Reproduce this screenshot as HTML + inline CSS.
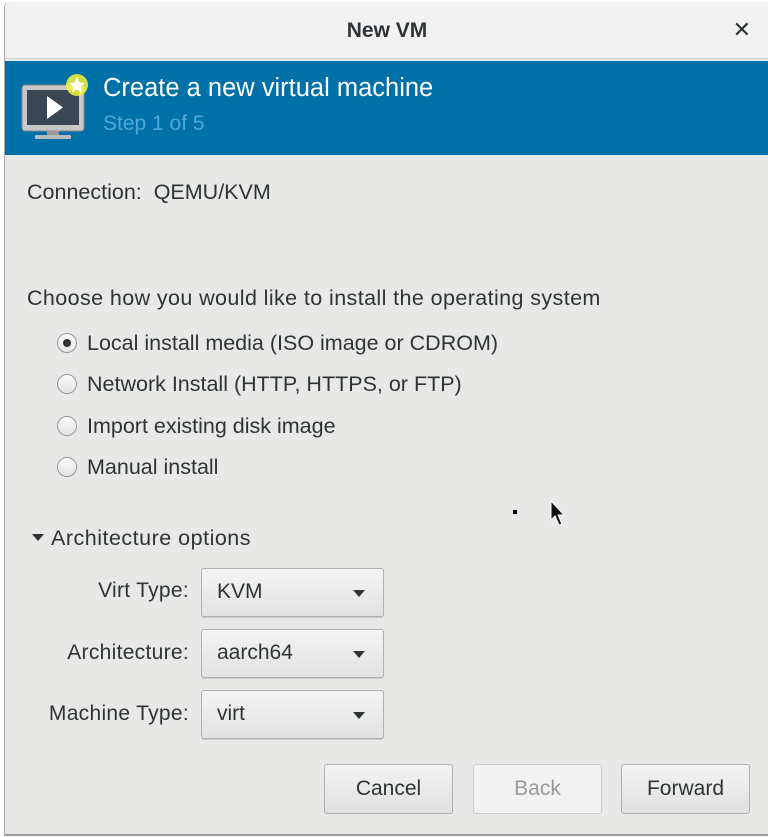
<!DOCTYPE html>
<html><head><style>
body{margin:0;width:768px;height:837px;background:#fff;position:relative;overflow:hidden;font-family:"Liberation Sans","DejaVu Sans",sans-serif;color:#2e3436}
.dlg{position:absolute;left:4px;top:2px;width:764px;height:832px;background:#e8e8e7;border-left:1px solid #aaa;border-bottom:2px solid #999;border-top-left-radius:6px;overflow:hidden}
.tb{position:absolute;left:0;top:0;width:764px;height:56px;background:#f2f2f2;border-bottom:1px solid #ccc}
.tb .t{position:absolute;left:0;width:764px;text-align:center;top:17px;font-size:21px;font-weight:bold;color:#2e3436}
.tb .x{position:absolute;right:18px;top:15px;font-size:22px;font-weight:bold}
.hd{position:absolute;left:0;top:59px;width:764px;height:94px;background:#0070a8}
.hd .a{position:absolute;left:98px;top:13px;font-size:25.5px;color:#fff}
.hd .b{position:absolute;left:98px;top:51px;font-size:21px;color:#4ea8d8}
.txt{position:absolute;font-size:21.5px;white-space:nowrap}
.radio{position:absolute;left:52px;width:20px;height:20px;border-radius:50%;border:1px solid #999;background:linear-gradient(#fafafa,#e4e4e4);box-sizing:border-box}
.radio.on:after{content:"";position:absolute;left:5px;top:5px;width:8px;height:8px;border-radius:50%;background:#2e3436}
.combo{position:absolute;left:196px;width:183px;height:49px;border:1px solid #b0b0b0;border-radius:3px;background:linear-gradient(#f4f4f4,#e2e2e2);box-sizing:border-box;box-shadow:0 1px 0 #ccc}
.combo span{position:absolute;left:15px;top:11px;font-size:21px}
.combo i{position:absolute;right:18px;top:21px;border-left:6px solid transparent;border-right:6px solid transparent;border-top:7px solid #2e3436}
.lbl{position:absolute;font-size:21px;text-align:right;width:184px;left:0;letter-spacing:0.3px}
.btn{position:absolute;top:762px;width:129px;height:50px;border:1px solid #b0b0b0;border-radius:3px;background:linear-gradient(#f4f4f4,#e0e0e0);box-sizing:border-box;text-align:center;line-height:48px;font-size:21px}
</style></head><body>
<div class="dlg">
 <div class="tb"><div class="t">New VM</div><div class="x">✕</div></div>
 <div class="hd">
  <svg style="position:absolute;left:12px;top:12px" width="76" height="70" viewBox="0 0 76 70">
   <rect x="5" y="12" width="62" height="46" rx="3" fill="#c8c8c8" stroke="#888"/>
   <rect x="10" y="17" width="52" height="35" fill="#3a4654"/>
   <polygon points="30,23 30,46 46,34.5" fill="#fff"/>
   <rect x="30" y="58" width="12" height="5" fill="#999"/>
   <rect x="18" y="62" width="36" height="4" rx="1" fill="#bbb"/>
   <circle cx="60" cy="12" r="11" fill="#f6f23a" opacity=".85"/>
   <polygon points="60,4 62.4,9.5 68,10 63.8,13.8 65,19.5 60,16.5 55,19.5 56.2,13.8 52,10 57.6,9.5" fill="#fff"/>
  </svg>
  <div class="a">Create a new virtual machine</div>
  <div class="b">Step 1 of 5</div>
 </div>
 <div class="txt" style="left:22px;top:178px">Connection:&nbsp; QEMU/KVM</div>
 <div class="txt" style="left:22px;top:284px;letter-spacing:0.4px">Choose how you would like to install the operating system</div>
 <div class="radio on" style="top:331px"></div><div class="txt" style="left:82px;top:329px">Local install media (ISO image or CDROM)</div>
 <div class="radio" style="top:372px"></div><div class="txt" style="left:82px;top:370px">Network Install (HTTP, HTTPS, or FTP)</div>
 <div class="radio" style="top:414px"></div><div class="txt" style="left:82px;top:412px">Import existing disk image</div>
 <div class="radio" style="top:455px"></div><div class="txt" style="left:82px;top:453px">Manual install</div>
 <div style="position:absolute;left:27px;top:532px;border-left:6px solid transparent;border-right:6px solid transparent;border-top:7px solid #2e3436"></div>
 <div class="txt" style="left:46px;top:524px;letter-spacing:0.5px">Architecture options</div>
 <div class="lbl" style="top:577px">Virt Type:</div>
 <div class="combo" style="top:566px"><span>KVM</span><i></i></div>
 <div class="lbl" style="top:639px">Architecture:</div>
 <div class="combo" style="top:627px"><span>aarch64</span><i></i></div>
 <div class="lbl" style="top:700px">Machine Type:</div>
 <div class="combo" style="top:688px"><span>virt</span><i></i></div>
 <div class="btn" style="left:319px">Cancel</div>
 <div class="btn" style="left:468px;background:#f2f2f2;color:#999;border-color:#ccc">Back</div>
 <div class="btn" style="left:616px">Forward</div>
 <div style="position:absolute;left:508px;top:508px;width:4px;height:4px;background:#000"></div>
 <svg style="position:absolute;left:545px;top:498px" width="16" height="28" viewBox="0 0 16 28"><path d="M1 1 L1 20 L5 16 L9 25 L12 24 L8 15 L14 15 Z" fill="#111" stroke="#fff" stroke-width="1"/></svg>
</div>
</body></html>
